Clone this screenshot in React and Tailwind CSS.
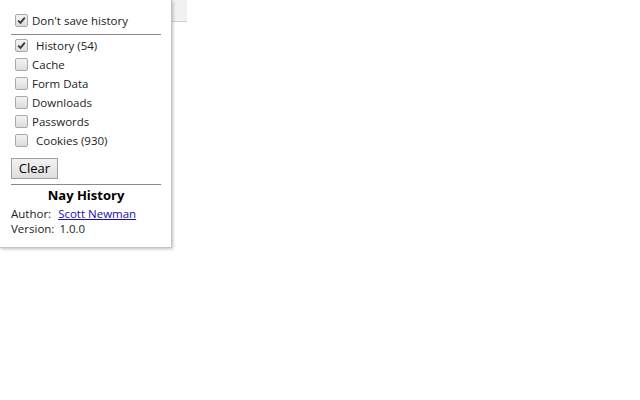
import React from "react";

function Box({ checked }) {
  return (
    <span className="flex h-[13px] w-[13px] shrink-0 items-center justify-center rounded-[2px] border border-[#a9a9a9] bg-gradient-to-b from-[#f4f4f4] to-[#dcdcdc]">
      {checked && (
        <svg width="9" height="9" viewBox="0 0 9 9">
          <path d="M1.2 4.6 L3.5 6.9 L7.8 1.6" fill="none" stroke="#3a3a3a" strokeWidth="1.9" />
        </svg>
      )}
    </span>
  );
}

function Row({ label, checked, pad }) {
  return (
    <div className="flex h-[19px] items-center">
      <Box checked={checked} />
      <span className={pad ? "ml-[8px]" : "ml-[4px]"}>{label}</span>
    </div>
  );
}

export default function App() {
  const items = [
    { label: "History (54)", checked: true, pad: true },
    { label: "Cache" },
    { label: "Form Data" },
    { label: "Downloads" },
    { label: "Passwords" },
    { label: "Cookies (930)", pad: true },
  ];

  return (
    <div
      className="relative h-[400px] w-[640px] bg-white text-[11.5px] leading-[15px] text-[#222]"
      style={{ fontFamily: "'Open Sans', 'Noto Sans', sans-serif" }}
    >
      <div className="h-[22px] w-[187px] border-b border-[#cfcfcf] bg-[#f1f1f1]" />

      <div className="absolute left-0 top-0 w-[172px] border-r border-b border-[#c4c4c4] bg-white pb-[11px] pl-[11px] pr-[10px] pt-[12px] shadow-[1px_1px_3px_rgba(0,0,0,0.25)]">
        <div className="flex h-[17px] items-center pl-[4px]">
          <Box checked />
          <span className="ml-[4px]">Don't save history</span>
        </div>
        <div className="mt-[5px] h-px bg-[#8a8a8a]" />

        <div className="mt-[1px] pl-[4px]">
          {items.map((it) => (
            <Row key={it.label} {...it} />
          ))}
        </div>

        <button className="mt-[8px] flex h-[21px] w-[47px] items-center justify-center border border-[#a0a0a0] bg-gradient-to-b from-[#f2f2f2] to-[#dedede] text-[13px] leading-none text-black">
          Clear
        </button>

        <div className="mt-[5px] h-px bg-[#8a8a8a]" />
        <div className="flex h-[21px] items-center justify-center text-[13px] font-bold text-black">
          Nay History
        </div>
        <div className="flex h-[15px] items-center">
          <span>Author:</span>
          <a href="#" className="ml-[7px] text-[#1a0dab] underline">
            Scott Newman
          </a>
        </div>
        <div className="flex h-[15px] items-center">
          <span>Version:</span>
          <span className="ml-[5px]">1.0.0</span>
        </div>
      </div>
    </div>
  );
}
